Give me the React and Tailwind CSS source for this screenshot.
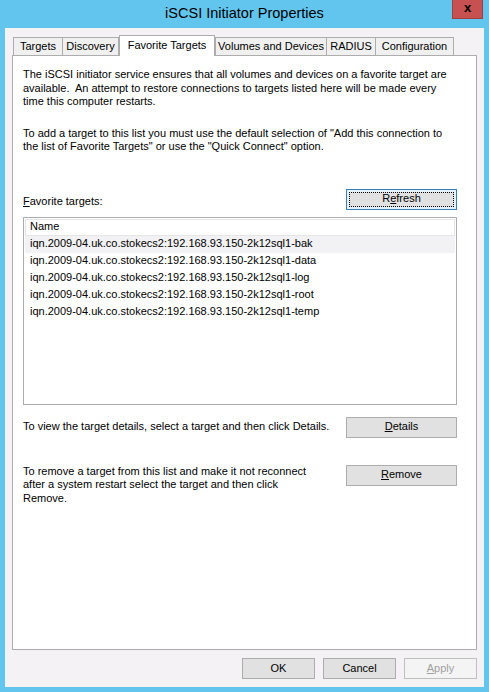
import React from "react";

const rows = [
  "iqn.2009-04.uk.co.stokecs2:192.168.93.150-2k12sql1-bak",
  "iqn.2009-04.uk.co.stokecs2:192.168.93.150-2k12sql1-data",
  "iqn.2009-04.uk.co.stokecs2:192.168.93.150-2k12sql1-log",
  "iqn.2009-04.uk.co.stokecs2:192.168.93.150-2k12sql1-root",
  "iqn.2009-04.uk.co.stokecs2:192.168.93.150-2k12sql1-temp",
];

function Tab({ label, w, first }) {
  return (
    <div
      className={`${w} h-[18px] ${first ? "" : "-ml-px"} border border-b-0 border-[#ADADAD] bg-[#F0F0F0] flex items-center justify-center leading-none`}
    >
      {label}
    </div>
  );
}

export default function App() {
  return (
    <div className="w-[489px] h-[692px] bg-[#62C5EE] flex flex-col font-['Liberation_Sans',Arial,sans-serif] text-[11px] text-black">
      <div className="relative h-[28px] flex items-center justify-center">
        <span className="text-[14.5px] leading-none -mt-[2px]">iSCSI Initiator Properties</span>
        <div className="absolute right-[6px] top-0 w-[31px] h-[19px] bg-[#C75050] border border-t-0 border-[#A13F3F] flex items-center justify-center">
          <span className="font-bold text-[13px] leading-none -mt-[3px]">x</span>
        </div>
      </div>
      <div className="flex-1 mx-[5px] mb-[5px] bg-[#F4F2F5] flex flex-col px-[7px] pt-[7px] pb-[8px]">
        <div className="flex items-end pl-[1px]">
          <Tab label="Targets" w="w-[50px]" first />
          <Tab label="Discovery" w="w-[57px]" />
          <div className="relative z-10 w-[96px] h-[21px] -mb-px border border-b-0 border-[#ADADAD] bg-white flex items-start justify-center pt-[3px] leading-[13px]">
            Favorite Targets
          </div>
          <Tab label="Volumes and Devices" w="w-[112px]" first />
          <Tab label="RADIUS" w="w-[50px]" />
          <Tab label="Configuration" w="w-[79px]" />
        </div>
        <div className="flex-1 bg-white border border-[#ADADAD] flex flex-col pl-[10px] pr-[19px] pt-[12px] leading-[13.5px]">
          <p className="whitespace-nowrap">
            The iSCSI initiator service ensures that all volumes and devices on a favorite target are
            <br />
            available.&nbsp; An attempt to restore connections to targets listed here will be made every
            <br />
            time this computer restarts.
          </p>
          <p className="mt-[18px] whitespace-nowrap">
            To add a target to this list you must use the default selection of "Add this connection to
            <br />
            the list of Favorite Targets" or use the "Quick Connect" option.
          </p>
          <div className="mt-[35px] flex items-end justify-between">
            <span className="mb-px">
              <u className="underline-offset-1">F</u>avorite targets:
            </span>
            <div className="w-[111px] h-[21px] bg-[#E5F1FB] border border-[#3C7FB1] p-[2px] flex">
              <div className="flex-1 border border-dotted border-black bg-[#E1E1E1] flex items-center justify-center">
                <span>
                  R<u className="underline-offset-1">e</u>fresh
                </span>
              </div>
            </div>
          </div>
          <div className="mt-[7px] h-[188px] border border-[#ABADB3] p-px flex flex-col">
            <div className="h-[17px] border border-[#E5E5E5] flex items-center pl-[4px]">Name</div>
            {rows.map((r, i) => (
              <div
                key={r}
                className={`h-[17px] flex items-center pl-[5px] ${i === 0 ? "bg-[#F2F1F4]" : ""}`}
              >
                {r}
              </div>
            ))}
          </div>
          <div className="mt-[12px] flex items-center justify-between">
            <span>To view the target details, select a target and then click Details.</span>
            <div className="w-[111px] h-[21px] bg-[#E1E1E1] border border-[#ADADAD] flex items-center justify-center">
              <span>
                <u className="underline-offset-1">D</u>etails
              </span>
            </div>
          </div>
          <div className="mt-[27px] flex items-start justify-between">
            <p className="whitespace-nowrap">
              To remove a target from this list and make it not reconnect
              <br />
              after a system restart select the target and then click
              <br />
              Remove.
            </p>
            <div className="w-[111px] h-[21px] bg-[#E1E1E1] border border-[#ADADAD] flex items-center justify-center">
              <span>
                <u className="underline-offset-1">R</u>emove
              </span>
            </div>
          </div>
        </div>
        <div className="mt-[8px] flex justify-end gap-[8px]">
          <div className="w-[73px] h-[21px] bg-[#E1E1E1] border border-[#ADADAD] flex items-center justify-center">OK</div>
          <div className="w-[73px] h-[21px] bg-[#E1E1E1] border border-[#ADADAD] flex items-center justify-center">Cancel</div>
          <div className="w-[73px] h-[21px] bg-[#F4F4F4] border border-[#BFBFBF] text-[#A0A0A0] flex items-center justify-center">
            <span>
              <u className="underline-offset-1">A</u>pply
            </span>
          </div>
        </div>
      </div>
    </div>
  );
}
